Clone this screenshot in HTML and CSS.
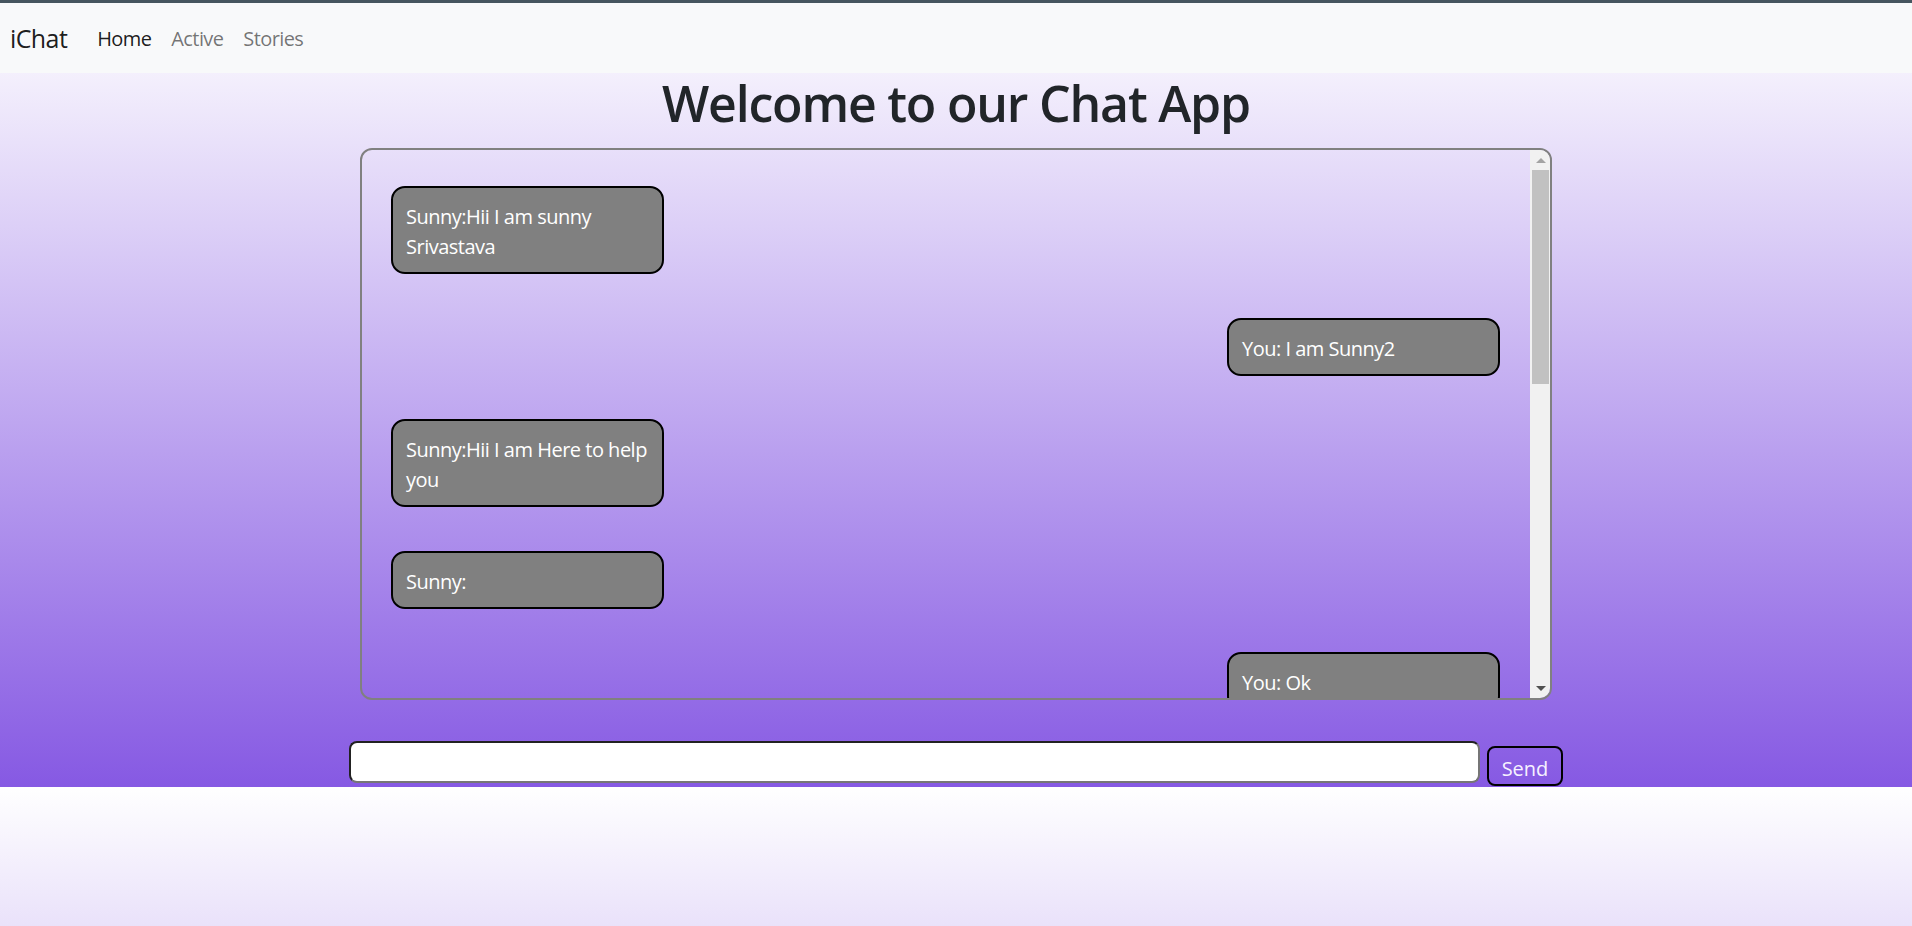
FILE: index.html
```html
<!DOCTYPE html>
<html lang="en">
<head>
<meta charset="utf-8">
<title>iChat</title>
<link rel="stylesheet" href="styles.css">
</head>
<body>
<header class="topbar">
  <nav class="nav">
    <a class="brand" href="#">iChat</a>
    <a class="nav-link active" href="#">Home</a>
    <a class="nav-link" href="#">Active</a>
    <a class="nav-link" href="#">Stories</a>
  </nav>
</header>
<main class="page">
  <h1 class="title">Welcome to our Chat App</h1>
  <div class="chat-box">
    <div class="chat-feed">
      <div class="msg left">Sunny:Hii I am sunny Srivastava</div>
      <div class="msg right">You: I am Sunny2</div>
      <div class="msg left">Sunny:Hii I am Here to help you</div>
      <div class="msg left">Sunny:</div>
      <div class="msg right">You: Ok</div>
      <div class="msg left">Sunny:How can I help?</div>
      <div class="msg right">You: Thanks</div>
      <div class="msg left">Sunny:Welcome</div>
      <div class="msg right">You: Bye</div>
      <div class="msg left">Sunny:Bye</div>
      <div class="msg right">You: See you</div>
      <div class="msg left">Sunny:Take care</div>
    </div>
    <div class="scrollbar" aria-hidden="true">
      <div class="sb-btn"><span class="arrow-up"></span></div>
      <div class="sb-track"><div class="sb-thumb"></div></div>
      <div class="sb-btn"><span class="arrow-down"></span></div>
    </div>
  </div>
  <form class="composer">
    <input class="composer-input" type="text">
    <button class="send-btn" type="button">Send</button>
  </form>
</main>
</body>
</html>
```

FILE: styles.css
```css
html {
  margin: 0;
}
body {
  margin: 0;
  font-family: "Open Sans", "Noto Sans", sans-serif;
  font-size: 20px;
  line-height: 1.5;
  letter-spacing: -0.5px;
  color: #212529;
  background: linear-gradient(to bottom, #ffffff, #8659e3);
}
.topbar {
  background: #f8f9fa;
  border-top: 3px solid #46555f;
}
.nav {
  box-sizing: border-box;
  height: 70px;
  display: flex;
  align-items: center;
  padding: 2px 0 0 10px;
}
.brand {
  font-size: 25px;
  letter-spacing: -0.6px;
  color: rgba(0, 0, 0, 0.9);
  text-decoration: none;
  margin-right: 20px;
}
.nav-link {
  padding: 0 10px;
  color: rgba(0, 0, 0, 0.55);
  text-decoration: none;
  letter-spacing: -0.6px;
}
.nav-link.active {
  color: rgba(0, 0, 0, 0.9);
}
.page {
  display: flex;
  flex-direction: column;
  align-items: center;
}
.title {
  margin: 0 0 15px;
  font-size: 50px;
  font-weight: 600;
  line-height: 60px;
  letter-spacing: -1.2px;
  color: #212529;
}
.chat-box {
  box-sizing: border-box;
  width: 1192px;
  height: 552px;
  border: 2px solid #808080;
  border-radius: 12px;
  overflow: hidden;
  display: flex;
}
.chat-feed {
  flex: 1;
  min-width: 0;
  overflow: hidden;
  display: flex;
  flex-direction: column;
  gap: 43.5px;
  padding: 36px 30px 36px 29px;
}
.scrollbar {
  flex: none;
  width: 20px;
  background: #f1f1f1;
  display: flex;
  flex-direction: column;
}
.sb-btn {
  flex: none;
  height: 20px;
  display: flex;
  align-items: center;
  justify-content: center;
}
.arrow-up {
  width: 0;
  height: 0;
  margin-left: 1px;
  border-left: 5px solid transparent;
  border-right: 5px solid transparent;
  border-bottom: 5px solid #a3a3a3;
}
.arrow-down {
  width: 0;
  height: 0;
  margin-left: 1px;
  border-left: 5px solid transparent;
  border-right: 5px solid transparent;
  border-top: 5px solid #505050;
}
.sb-track {
  flex: 1;
}
.sb-thumb {
  height: 214px;
  margin: 0 1px 0 2px;
  background: #c1c1c1;
}
.msg {
  flex: none;
  box-sizing: border-box;
  width: 273px;
  padding: 14px 12px 10px 13px;
  background: #808080;
  border: 2px solid #000;
  border-radius: 14px;
  color: #ffffff;
  line-height: 30px;
}
.msg.left {
  align-self: flex-start;
}
.msg.right {
  align-self: flex-end;
}
.composer {
  box-sizing: border-box;
  width: 1214px;
  height: 87px;
  margin: 0;
  padding-top: 41px;
  display: flex;
  align-items: flex-start;
  gap: 7px;
}
.composer-input {
  flex: 1;
  box-sizing: border-box;
  height: 42px;
  margin: 0;
  padding: 0 10px;
  font: inherit;
  background: #fff;
  border: 2px solid;
  border-color: #222 #767676 #767676 #222;
  border-radius: 8px;
}
.send-btn {
  box-sizing: border-box;
  width: 76px;
  height: 40px;
  margin: 5px 0 0;
  padding: 6px 0 0;
  font: inherit;
  color: #f6f2ff;
  background: transparent;
  border: 2px solid #000;
  border-radius: 8px;
}
```
